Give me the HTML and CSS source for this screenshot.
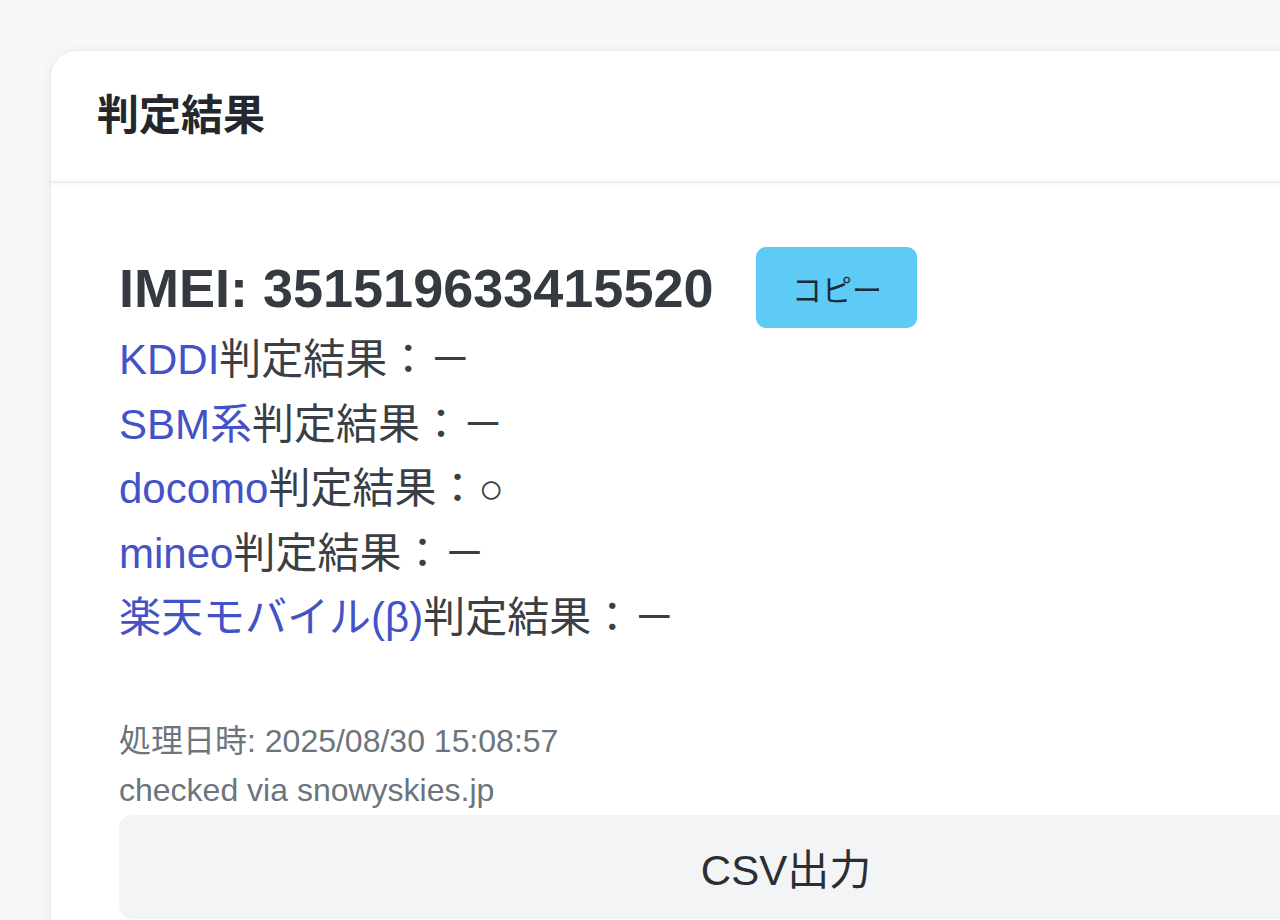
FILE: index.html
```html
<!DOCTYPE html>
<html lang="ja">
<head>
    <meta charset="UTF-8">
    <meta name="viewport" content="width=device-width, initial-scale=1.0">
    <title>判定結果</title>
    <link rel="stylesheet" href="styles.css">
</head>
<body>
    <div class="card">
        <div class="card-header">
            <h2 class="card-title">判定結果</h2>
        </div>
        <div class="card-body">
            <div class="imei-row">
                <h3 class="imei">IMEI: 351519633415520</h3>
                <button class="btn-copy">コピー</button>
            </div>
            <ul class="results">
                <li><a href="#">KDDI</a>判定結果：－</li>
                <li><a href="#">SBM系</a>判定結果：－</li>
                <li><a href="#">docomo</a>判定結果：○</li>
                <li><a href="#">mineo</a>判定結果：－</li>
                <li><a href="#">楽天モバイル(β)</a>判定結果：－</li>
            </ul>
            <p class="meta">処理日時: 2025/08/30 15:08:57</p>
            <p class="meta">checked via snowyskies.jp</p>
            <button class="btn-csv">CSV出力</button>
        </div>
    </div>
</body>
</html>
```

FILE: styles.css
```css
body {
    font-family: 'Liberation Sans', Arial, 'Noto Sans CJK JP', sans-serif;
    margin: 0;
    padding: 50px 0 0 50px;
    background: #f8f8f8;
    color: #343a40;
    overflow: hidden;
}
.card {
    width: 1470px;
    background: #fff;
    border: 1px solid #ececec;
    border-radius: 26px;
    box-shadow: 0 2px 14px rgba(0, 0, 0, 0.05);
}
.card-header {
    padding: 40px 46px 40px;
    border-bottom: 2px solid #eeeeee;
    box-shadow: 0 3px 6px rgba(0, 0, 0, 0.03);
}
.card-title {
    margin: 0;
    font-size: 42px;
    line-height: 50px;
    font-weight: bold;
    color: #24272b;
}
.card-body {
    padding: 64px 68px 68px;
}
.imei-row {
    display: flex;
    align-items: center;
    gap: 43px;
}
.imei {
    margin: 0;
    font-size: 54px;
    line-height: 64px;
    font-weight: bold;
    color: #343a40;
}
.btn-copy {
    width: 161px;
    height: 81px;
    border: none;
    border-radius: 10px;
    background: #5ecbf6;
    color: #1c2a3a;
    font-family: 'Noto Sans CJK JP', sans-serif;
    font-size: 30px;
}
.results {
    list-style: none;
    margin: 0;
    padding: 0;
    font-size: 42px;
    line-height: 64.5px;
    color: #3a3f45;
}
.results a {
    color: #4352c6;
    text-decoration: none;
}
.meta {
    margin: 0;
    font-size: 32px;
    line-height: 49px;
    color: #6c757d;
}
.results + .meta {
    margin-top: 66px;
}
.btn-csv {
    display: block;
    width: 100%;
    height: 104px;
    margin-top: 0;
    border: none;
    border-radius: 14px;
    background: #f3f4f6;
    color: #2b2f33;
    font-family: 'Liberation Sans', 'Noto Sans CJK JP', sans-serif;
    font-size: 42px;
}
```
